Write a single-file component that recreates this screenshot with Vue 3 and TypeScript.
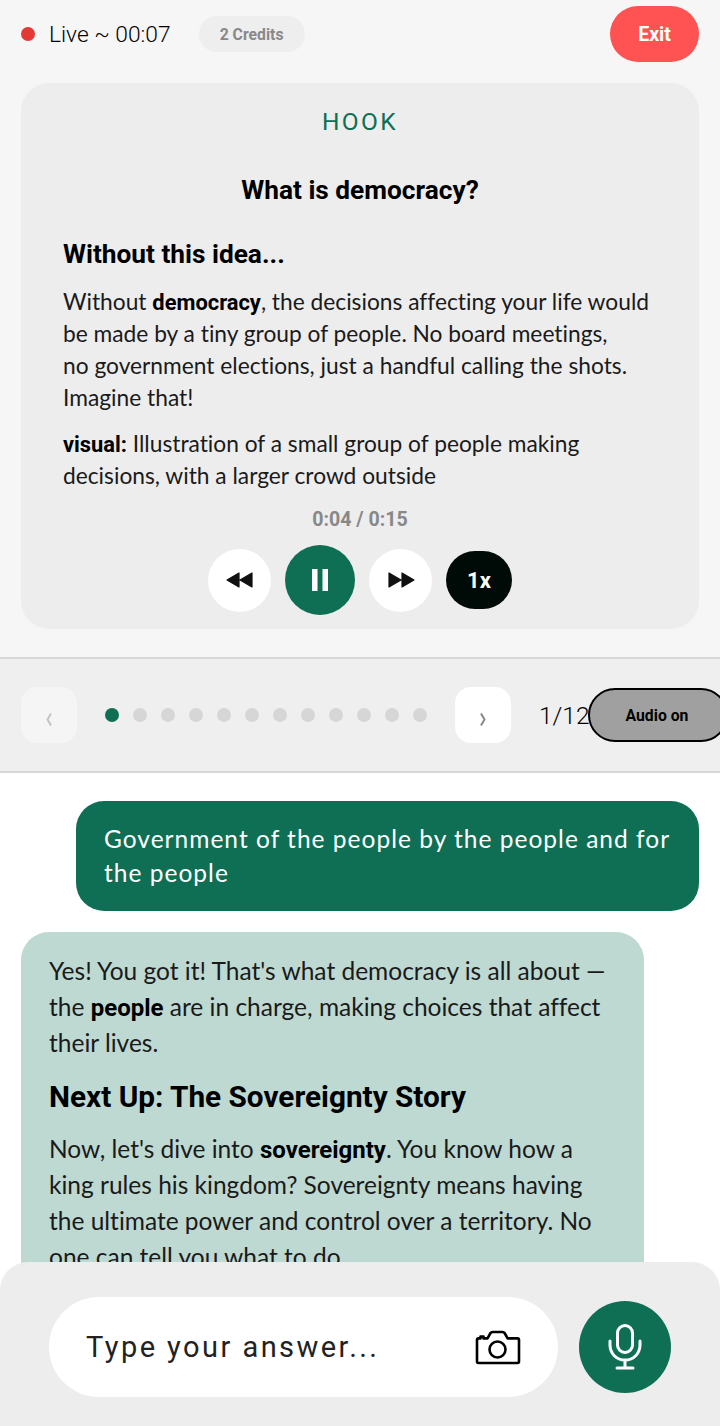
<script setup lang="ts">
const dots: number[] = Array.from({ length: 12 }, (_, i) => i)
</script>

<template>
  <div class="page">
    <section class="top">
      <header class="status">
        <div class="live">
          <span class="rec"></span>
          <span class="live-text">Live ~ 00:07</span>
          <span class="credits">2 Credits</span>
        </div>
        <button class="exit">Exit</button>
      </header>
      <article class="card">
        <div class="label">HOOK</div>
        <h2 class="question">What is democracy?</h2>
        <h3 class="sub">Without this idea...</h3>
        <p class="para">Without <b>democracy</b>, the decisions affecting your life would be made by a tiny group of people. No board meetings,<br />no government elections, just a handful calling the shots. Imagine that!</p>
        <p class="para visual"><b>visual:</b> Illustration of a small group of people making decisions, with a larger crowd outside</p>
        <div class="time">0:04 / 0:15</div>
        <div class="controls">
          <button class="ctl">
            <svg width="28" height="16" viewBox="0 0 28 16"><path d="M1 8 13 1v14zM14 8 26 1v14z" fill="#111" stroke="#111" stroke-width="1.2" stroke-linejoin="round"/></svg>
          </button>
          <button class="ctl play">
            <svg width="16" height="22" viewBox="0 0 16 22"><rect width="5.500" height="22" fill="#fff"/><rect x="10.500" width="5.500" height="22" fill="#fff"/></svg>
          </button>
          <button class="ctl">
            <svg width="28" height="16" viewBox="0 0 28 16"><path d="M14 8 2 1v14zM27 8 15 1v14z" fill="#111" stroke="#111" stroke-width="1.2" stroke-linejoin="round"/></svg>
          </button>
          <button class="speed">1x</button>
        </div>
      </article>
    </section>

    <nav class="pager">
      <button class="nav off" aria-label="Previous">
        <svg width="6" height="13" viewBox="0 0 6 13" fill="none" stroke="currentColor" stroke-width="2"><path d="M5 .5 1.500 6.500 5 12.500"/></svg>
      </button>
      <div class="dots">
        <span v-for="d in dots" :key="d" class="dot" :class="{ on: d === 0 }"></span>
      </div>
      <button class="nav" aria-label="Next">
        <svg width="6" height="13" viewBox="0 0 6 13" fill="none" stroke="currentColor" stroke-width="2"><path d="M1 .5 4.500 6.500 1 12.500"/></svg>
      </button>
      <span class="count">1/12</span>
      <button class="audio">Audio on</button>
    </nav>

    <main class="chat">
      <div class="bubble user">Government of the people by the people and for the people</div>
      <div class="bubble bot">
        <p>Yes! You got it! That's what democracy is all about — the <b>people</b> are in charge, making choices that affect their lives.</p>
        <h3>Next Up: The Sovereignty Story</h3>
        <p>Now, let's dive into <b>sovereignty</b>. You know how a king rules his kingdom? Sovereignty means having the ultimate power and control over a territory. No one can tell you what to do.</p>
      </div>
    </main>

    <footer class="composer">
      <div class="field">
        <span class="placeholder">Type your answer...</span>
        <svg width="46" height="36" viewBox="0 0 46 36" fill="none" stroke="#000" stroke-width="2.600" stroke-linejoin="round" stroke-linecap="round"><path d="M2 11c0-1 .6-1.600 1.600-1.600H5.500V7.500h3v1.900h4L15.500 4c.5-.7 1-1 2-1h10c1 0 1.600.3 2.100 1l3 5.400h9.900c1 0 1.500.6 1.500 1.600v21.500c0 1-.5 1.500-1.500 1.500H3.500C2.500 34 2 33.500 2 32.500z"/><circle cx="22.500" cy="20.500" r="8"/></svg>
      </div>
      <button class="mic">
        <svg width="34" height="46" viewBox="0 0 34 46" fill="none" stroke="#fff" stroke-width="3" stroke-linecap="round"><rect x="9.500" y="1.500" width="15" height="27" rx="7.500"/><path d="M2 17v4c0 8.500 6.500 15 15 15s15-6.500 15-15v-4M17 36v7.500M9 44h16"/></svg>
      </button>
    </footer>
  </div>
</template>

<style>
html, body { margin: 0; padding: 0; background: #fff; }
</style>

<style scoped>
.page {
  position: relative;
  width: 720px;
  height: 1426px;
  overflow: hidden;
  display: flex;
  flex-direction: column;
  font-family: Lato, "Noto Sans", sans-serif;
  font-variant-ligatures: none;
  color: #111;
  background: #fff;
}
button { border: 0; padding: 0; font: inherit; cursor: pointer; }
.top { height: 657px; box-sizing: border-box; background: #f6f6f6; padding: 6px 21px 0; flex: none; }
.status { display: flex; justify-content: space-between; align-items: center; height: 56px; }
.live { display: flex; align-items: center; }
.rec { width: 14px; height: 14px; border-radius: 50%; background: #e53935; margin-right: 14px; }
.live-text { font-size: 22.750px; font-family: Roboto, sans-serif; font-weight: 300; color: #000; margin-right: 28px; }
.credits { display: flex; align-items: center; justify-content: center; width: 106px; height: 36px; border-radius: 18px; background: #eeeeee; font: 700 15.750px Roboto, sans-serif; color: #888; }
.exit { width: 89px; height: 56px; border-radius: 28px; background: #ff5252; color: #fff; font: 700 19.500px/58px Roboto, sans-serif; }
.card { margin-top: 21px; height: 546px; box-sizing: border-box; border-radius: 28px; background: #ededed; padding: 24px 42px 0; }
.label { text-align: center; font: 400 24.500px/30px Roboto, sans-serif; letter-spacing: 2.400px; color: #0f6f55; }
.question { margin: 37px 0 0; text-align: center; font: 700 26.250px/32px Roboto, sans-serif; color: #000; }
.sub { margin: 32px 0 0; font: 700 26.250px/32px Roboto, sans-serif; color: #000; }
.para { margin: 16px 0 0; font-size: 22.750px; line-height: 32px; color: #1a1a1a; }
.para b { font-family: Roboto, sans-serif; font-size: 21.875px; font-weight: 700; color: #000; line-height: 0; }
.visual { margin-top: 14px; }
.time { margin-top: 14px; text-align: center; font: 700 19.600px/28px Roboto, sans-serif; color: #888; }
.controls { margin-top: 11px; display: flex; justify-content: center; align-items: center; gap: 14px; }
.ctl { width: 63px; height: 63px; border-radius: 50%; background: #fff; display: flex; align-items: center; justify-content: center; }
.play { width: 70px; height: 70px; background: #0f6f55; }
.speed { width: 66px; height: 58px; border-radius: 29px; background: #000a06; color: #fff; font: 700 22px Roboto, sans-serif; margin-left: 0; }
.pager {
  flex: none;
  height: 116px;
  box-sizing: border-box;
  border-top: 2px solid #d8d8d8;
  border-bottom: 2px solid #d8d8d8;
  background: #efefef;
  display: flex;
  align-items: center;
  padding-left: 21px;
  position: relative;
}
.nav { width: 56px; height: 56px; border-radius: 16px; background: #fff; color: #888; display: flex; align-items: center; justify-content: center; }
.nav svg { position: relative; top: 4px; }
.nav.off { background: #f5f5f5; color: #c4c4c4; }
.dots { display: flex; gap: 14px; margin: 0 28px; }
.dot { width: 14px; height: 14px; border-radius: 50%; background: #d6d6d6; }
.dot.on { background: #0f6f55; }
.count { margin-left: 28px; font: 300 24.500px Roboto, sans-serif; color: #000; }
.audio { position: absolute; left: 588px; top: 29px; width: 140px; height: 54px; box-sizing: border-box; border: 2px solid #000; border-radius: 27px; background: #a0a0a0; color: #000; font: 700 15.750px Roboto, sans-serif; padding-right: 2px; }
.chat { flex: 1; min-height: 0; padding: 28px 21px 0; display: flex; flex-direction: column; gap: 21px; }
.bubble { box-sizing: border-box; }
.user { align-self: flex-end; width: 623px; height: 110px; padding: 21px 28px; border-radius: 28px; background: #0f6f55; color: #fff; line-height: 34px; letter-spacing: 1.020px; font-size: 24.500px; }
.bot { width: 623px; padding: 21px 28px; border-radius: 28px; background: #bed8d2; color: #1a1a1a; font-size: 24.500px; line-height: 36px; }
.bot p { margin: 0; }
.bot b { font-family: Roboto, sans-serif; font-size: 24px; font-weight: 700; color: #000; line-height: 0; }
.bot h3 { margin: 18px 0 16px; font: 700 29.750px/36px Roboto, sans-serif; color: #000; }
.composer {
  position: absolute;
  left: 0;
  right: 0;
  bottom: 0;
  height: 164px;
  box-sizing: border-box;
  padding: 35px 49px 0;
  background: #ededed;
  border-radius: 28px 28px 0 0;
  display: flex;
  align-items: flex-start;
  gap: 21px;
}
.field { width: 509px; height: 100px; border-radius: 50px; background: #fff; display: flex; align-items: center; justify-content: space-between; padding: 0 37px 0 37px; box-sizing: border-box; }
.placeholder { font: 400 29px Roboto, sans-serif; letter-spacing: 2.450px; color: #222; }
.mic { margin-top: 4px; width: 92px; height: 92px; border-radius: 50%; background: #0f6f55; display: flex; align-items: center; justify-content: center; }
</style>
